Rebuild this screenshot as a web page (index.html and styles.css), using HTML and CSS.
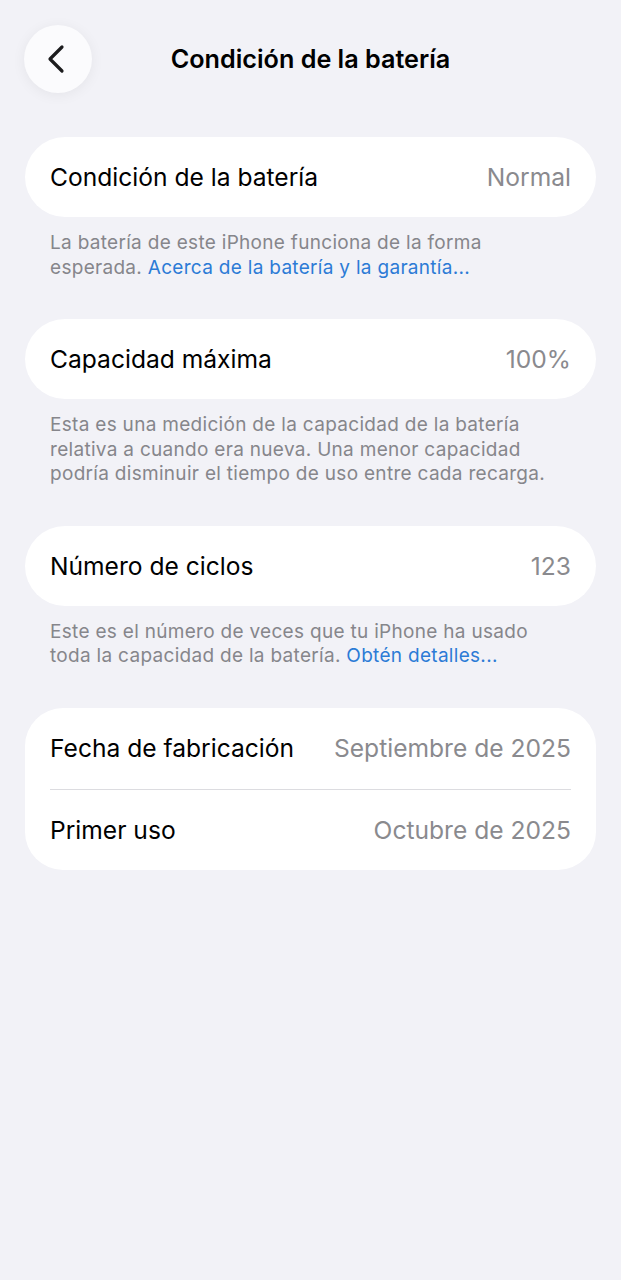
FILE: index.html
```html
<!DOCTYPE html>
<html lang="es">
<head>
<meta charset="utf-8">
<title>Condición de la batería</title>
<link rel="stylesheet" href="styles.css">
</head>
<body>
<div class="screen">
  <header class="nav">
    <button class="back" aria-label="Atrás">
      <svg width="24" height="32" viewBox="0 0 24 32"><path d="M17 4 L5 16 L17 28" fill="none" stroke="#1c1c1e" stroke-width="3.2" stroke-linecap="round" stroke-linejoin="round"/></svg>
    </button>
    <h1 class="title">Condición de la batería</h1>
  </header>

  <section class="group">
    <div class="card">
      <div class="row"><span class="label">Condición de la batería</span><span class="value">Normal</span></div>
    </div>
    <p class="note">La batería de este iPhone funciona de la forma<br>esperada. <a class="link" href="#">Acerca de la batería y la garantía...</a></p>
  </section>

  <section class="group">
    <div class="card">
      <div class="row"><span class="label">Capacidad máxima</span><span class="value">100%</span></div>
    </div>
    <p class="note">Esta es una medición de la capacidad de la batería<br>relativa a cuando era nueva. Una menor capacidad<br>podría disminuir el tiempo de uso entre cada recarga.</p>
  </section>

  <section class="group">
    <div class="card">
      <div class="row"><span class="label">Número de ciclos</span><span class="value">123</span></div>
    </div>
    <p class="note">Este es el número de veces que tu iPhone ha usado<br>toda la capacidad de la batería. <a class="link" href="#">Obtén detalles...</a></p>
  </section>

  <section class="group">
    <div class="card multi">
      <div class="row"><span class="label">Fecha de fabricación</span><span class="value">Septiembre de 2025</span></div>
      <div class="row"><span class="label">Primer uso</span><span class="value">Octubre de 2025</span></div>
    </div>
  </section>
</div>
</body>
</html>
```
FILE: styles.css
```css
html, body {
  margin: 0;
  padding: 0;
  background: #f2f2f7;
}
body {
  font-family: Inter, "Noto Sans", "Liberation Sans", sans-serif;
  color: #000;
  -webkit-font-smoothing: antialiased;
}
.screen {
  width: 621px;
  min-height: 1280px;
  padding: 25px 25px 0;
  box-sizing: border-box;
}
.nav {
  position: relative;
  height: 68px;
  display: flex;
  align-items: center;
  justify-content: center;
  margin-bottom: 44px;
}
.back {
  position: absolute;
  left: -1px;
  top: 0;
  width: 68px;
  height: 68px;
  border-radius: 50%;
  border: none;
  background: #fbfbfd;
  box-shadow: 0 2px 14px rgba(0,0,0,0.06);
  display: flex;
  align-items: center;
  justify-content: center;
  padding: 0 3px 0 0;
}
.title {
  margin: 0;
  font-size: 25.2px;
  font-weight: 600;
  letter-spacing: 0;
  color: #000;
}
.group {
  margin-bottom: 39px;
}
.card {
  background: #fff;
  border-radius: 40px;
  padding: 0 25px;
}
.card.multi {
  border-radius: 38px;
}
.row {
  height: 80px;
  display: flex;
  align-items: center;
  justify-content: space-between;
  font-size: 24.6px;
  letter-spacing: 0;
  box-sizing: border-box;
}
.multi .row {
  height: 81px;
}
.multi .row + .row {
  border-top: 1px solid #dcdce0;
}
.label {
  color: #000;
}
.value {
  color: #8a8a8e;
}
.note {
  margin: 14px 25px 0;
  font-size: 19px;
  line-height: 24.5px;
  letter-spacing: 0.3px;
  color: #86868b;
  white-space: nowrap;
}
.link {
  color: #2c7bd6;
  text-decoration: none;
}
```
